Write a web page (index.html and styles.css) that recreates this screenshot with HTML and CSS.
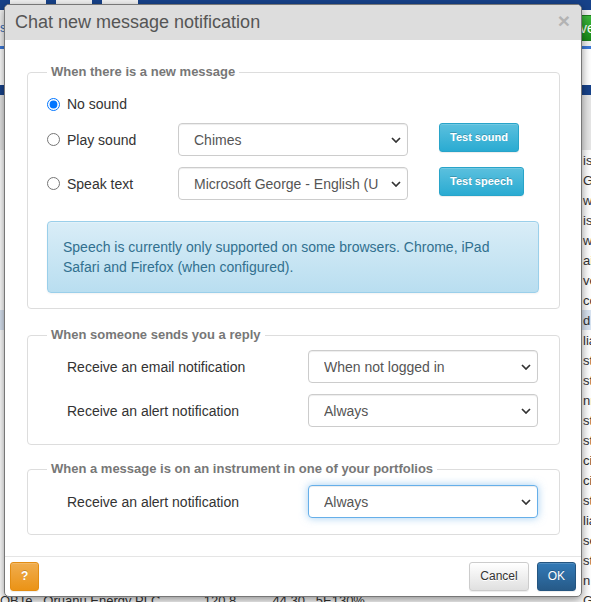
FILE: index.html
```html
<!DOCTYPE html>
<html lang="en">
<head>
  <meta charset="UTF-8" />
  <meta name="viewport" content="width=device-width, initial-scale=1.0" />
  <title>Chat new message notification</title>
  <link rel="stylesheet" href="styles.css">
</head>
<body>
  <div class="page">
    <div class="page-top">
      <span class="tab"></span><span class="tab"></span><span class="tab"></span>
    </div>
    <div class="toolbar">
      <span class="crumb">s</span>
      <button class="save">Save</button>
    </div>
    <div class="rule"></div>
    <div class="panel-head"></div>
    <div class="panel-sub"></div>
    <table class="grid">
      <tr><td></td><td>istanbul</td></tr>
      <tr><td></td><td>Group</td></tr>
      <tr><td></td><td>world</td></tr>
      <tr><td></td><td>istanbul</td></tr>
      <tr><td></td><td>world</td></tr>
      <tr><td></td><td>ail</td></tr>
      <tr><td></td><td>ventures</td></tr>
      <tr><td></td><td>corp</td></tr>
      <tr class="hl"><td></td><td>d</td></tr>
      <tr><td></td><td>lia</td></tr>
      <tr><td></td><td>st</td></tr>
      <tr><td></td><td>st</td></tr>
      <tr><td></td><td>nn</td></tr>
      <tr><td></td><td>st</td></tr>
      <tr><td></td><td>st</td></tr>
      <tr><td></td><td>cio</td></tr>
      <tr><td></td><td>cio</td></tr>
      <tr><td></td><td>st</td></tr>
      <tr><td></td><td>lia</td></tr>
      <tr><td></td><td>se</td></tr>
      <tr><td></td><td>sti</td></tr>
      <tr><td></td><td>n</td></tr>
      <tr><td>OBTe &nbsp; Oruanu Energy PLC &nbsp;&nbsp;&nbsp;&nbsp;&nbsp;&nbsp;&nbsp;&nbsp;&nbsp;&nbsp; 120.8 &nbsp;&nbsp;&nbsp;&nbsp;&nbsp;&nbsp;&nbsp;&nbsp; 44.30 &nbsp; 5E130%</td><td>G</td></tr>
    </table>
  </div>

  <div class="modal">
    <div class="modal-header">
      <h4 class="modal-title">Chat new message notification</h4>
      <span class="close">&times;</span>
    </div>

    <div class="modal-body">
      <fieldset>
        <legend>When there is a new message</legend>
        <div class="opt-row first">
          <label class="radio"><input type="radio" name="sound" checked /> No sound</label>
        </div>
        <div class="opt-row">
          <label class="radio"><input type="radio" name="sound" /> Play sound</label>
          <select><option>Chimes</option></select>
          <button class="btn btn-info">Test sound</button>
        </div>
        <div class="opt-row">
          <label class="radio"><input type="radio" name="sound" /> Speak text</label>
          <select><option>Microsoft George - English (United Kingdom)</option></select>
          <button class="btn btn-info">Test speech</button>
        </div>
        <div class="alert-info">
          Speech is currently only supported on some browsers. Chrome, iPad Safari and Firefox (when configured).
        </div>
      </fieldset>

      <fieldset class="second">
        <legend>When someone sends you a reply</legend>
        <div class="field-row">
          <span>Receive an email notification</span>
          <select><option>When not logged in</option></select>
        </div>
        <div class="field-row">
          <span>Receive an alert notification</span>
          <select><option>Always</option></select>
        </div>
      </fieldset>

      <fieldset class="third">
        <legend>When a message is on an instrument in one of your portfolios</legend>
        <div class="field-row">
          <span>Receive an alert notification</span>
          <select class="focus"><option>Always</option></select>
        </div>
      </fieldset>
    </div>

    <div class="modal-footer">
      <button class="btn btn-warning">?</button>
      <div class="actions">
        <button class="btn btn-default">Cancel</button>
        <button class="btn btn-primary">OK</button>
      </div>
    </div>
  </div>
</body>
</html>
```

FILE: styles.css
```css
body {
  margin: 0;
  font-family: "Liberation Sans", Arial, sans-serif;
  font-size: 14px;
  color: #333;
  background: #fff;
  overflow: hidden;
}

/* page behind the dialog */
.page {
  width: 640px;
}
.page-top {
  height: 10px;
  background: #17428a;
  display: flex;
  gap: 10px;
  padding-left: 10px;
}
.tab {
  width: 36px;
  height: 5px;
  background: #f2f2f2;
}
.toolbar {
  height: 36px;
  display: flex;
  align-items: center;
  background: #f3f3f3;
}
.crumb {
  width: 552px;
  color: #2a64b4;
  font-size: 12px;
}
.save {
  height: 26px;
  padding: 0 10px;
  border: 1px solid #1d7d1d;
  background: linear-gradient(#3cb83c, #188a18);
  color: #fff;
  font-family: inherit;
  font-size: 14px;
}
.rule {
  height: 3px;
  background: #3b78d8;
  margin-bottom: 36px;
}
.panel-head {
  height: 10px;
  background: #17428a;
}
.panel-sub {
  height: 55px;
  background: #e6e6e6;
}
.grid {
  border-collapse: collapse;
  font-size: 13px;
}
.grid td {
  height: 20px;
  padding: 0;
  white-space: nowrap;
}
.grid td:first-child {
  width: 583px;
}
.grid tr.hl td {
  background: #d9e4f2;
}

/* dialog */
.modal {
  position: absolute;
  left: 4px;
  top: 4px;
  width: 576px;
  height: 591px;
  background: #fff;
  border: 1px solid #777;
  border-radius: 5px;
  box-shadow: 0 3px 10px rgba(0, 0, 0, 0.45);
  display: flex;
  flex-direction: column;
  overflow: hidden;
}
.modal-header {
  height: 35px;
  flex-shrink: 0;
  background: #ddd;
  display: flex;
  align-items: center;
  justify-content: space-between;
  padding: 0 10px;
}
.modal-title {
  margin: 0;
  font-size: 18px;
  font-weight: normal;
  color: #555;
}
.close {
  font-size: 21px;
  font-weight: bold;
  color: #b3b3b3;
  line-height: 1;
  margin: 0 1px 4px 0;
}
.modal-body {
  flex: 1;
  padding: 24px 21px 0 22px;
}
fieldset {
  margin: 0;
  padding: 0 20px 15px 19px;
  border: 1px solid #ddd;
  border-radius: 4px;
  min-inline-size: 0;
}
legend {
  padding: 0 4px;
  font-size: 13px;
  line-height: 16px;
  font-weight: bold;
  color: #777;
}
fieldset.second {
  margin-top: 18px;
  padding-bottom: 17px;
}
fieldset.third {
  margin-top: 16px;
  padding-bottom: 16px;
}

.opt-row {
  display: grid;
  grid-template-columns: 131px 230px auto;
  align-items: center;
  margin-top: 9px;
}
.opt-row.first {
  margin-top: 14px;
  height: 20px;
}
.opt-row + .opt-row + .opt-row {
  margin-top: 11px;
}
.opt-row .btn {
  align-self: start;
  justify-self: start;
  margin-left: 31px;
}
.radio {
  display: flex;
  align-items: center;
  gap: 7px;
}
.radio input {
  margin: 0;
  width: 13px;
  height: 13px;
}

select {
  appearance: none;
  height: 33px;
  width: 230px;
  padding: 0 28px 0 15px;
  border: 1px solid #ccc;
  border-radius: 4px;
  background: #fff url("data:image/svg+xml;utf8,<svg xmlns='http://www.w3.org/2000/svg' width='10' height='6' viewBox='0 0 10 6'><path d='M1 1l4 4 4-4' fill='none' stroke='%23333' stroke-width='1.7'/></svg>") no-repeat right 6px center;
  font-family: inherit;
  font-size: 14px;
  color: #555;
  box-shadow: inset 0 1px 1px rgba(0, 0, 0, 0.075);
}
select.focus {
  border-color: #66afe9;
  box-shadow: inset 0 1px 1px rgba(0, 0, 0, 0.075), 0 0 8px rgba(102, 175, 233, 0.6);
}

.alert-info {
  margin-top: 21px;
  padding: 15px;
  line-height: 20px;
  color: #31708f;
  background: linear-gradient(#d9edf7, #b9def0);
  border: 1px solid #9acfea;
  border-radius: 4px;
  box-shadow: inset 0 1px 0 rgba(255, 255, 255, 0.25), 0 1px 2px rgba(0, 0, 0, 0.05);
}

.field-row {
  display: grid;
  grid-template-columns: 241px 230px;
  align-items: center;
  padding-left: 20px;
  margin-top: 11px;
}
.field-row:first-of-type {
  margin-top: 7px;
}
fieldset.third .field-row {
  margin-top: 8px;
}

.btn {
  font-family: inherit;
  font-size: 12px;
  line-height: 15px;
  padding: 6px 10px;
  border: 1px solid transparent;
  border-radius: 3px;
  white-space: nowrap;
  cursor: pointer;
  box-shadow: inset 0 1px 0 rgba(255, 255, 255, 0.15), 0 1px 1px rgba(0, 0, 0, 0.075);
}
.btn-info {
  color: #fff;
  font-size: 11px;
  font-weight: bold;
  text-shadow: 0 -1px 0 rgba(0, 0, 0, 0.2);
  background: linear-gradient(#5bc0de, #2aabd2);
  border-color: #28a4c9;
}
.btn-warning {
  color: #fff;
  font-weight: bold;
  text-shadow: 0 -1px 0 rgba(0, 0, 0, 0.2);
  background: linear-gradient(#f0ad4e, #eb9316);
  border-color: #e38d13;
}
.btn-default {
  color: #333;
  text-shadow: 0 1px 0 #fff;
  background: linear-gradient(#fff, #e0e0e0);
  border-color: #ccc;
}
.btn-primary {
  color: #fff;
  text-shadow: 0 -1px 0 rgba(0, 0, 0, 0.2);
  background: linear-gradient(#337ab7, #265a88);
  border-color: #245580;
}

.modal-footer {
  flex-shrink: 0;
  display: flex;
  justify-content: space-between;
  padding: 5px;
  border-top: 1px solid #e5e5e5;
}
.actions {
  display: flex;
  gap: 8px;
}
```
